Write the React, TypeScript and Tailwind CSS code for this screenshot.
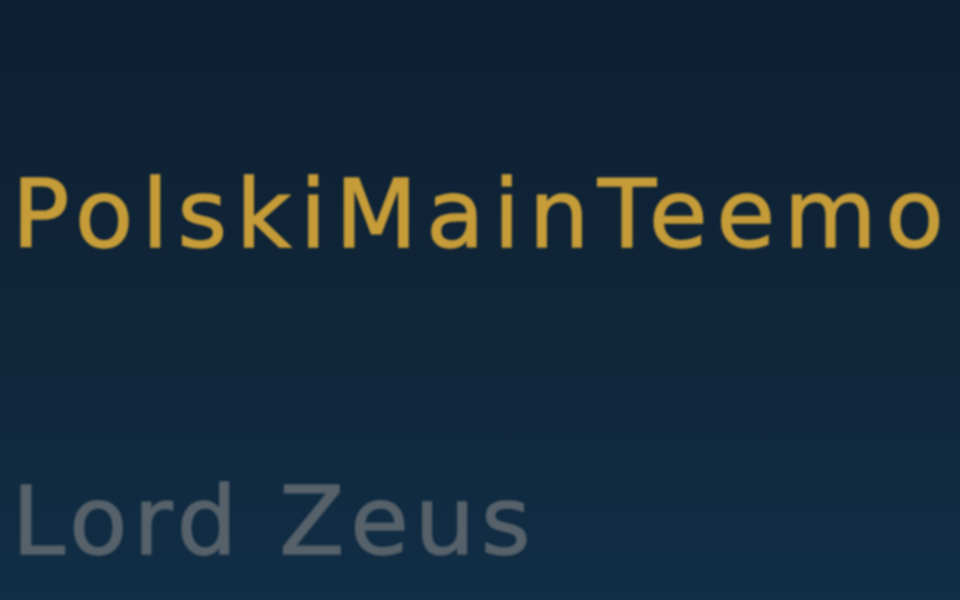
import React from 'react';

const names = [
  { name: 'PolskiMainTeemo', color: 'text-[#c69c38]', tracking: 'tracking-[9px]' },
  { name: 'Lord Zeus', color: 'text-[#56616a]', tracking: 'tracking-[6px]' },
];

const App: React.FC = () => {
  return (
    <div className="h-[600px] w-[960px] overflow-hidden bg-gradient-to-b from-[#0e2033] via-[#0f2538] to-[#112e46]">
      <div
        className="flex flex-col gap-[212px] pl-[12px] pt-[167px] blur-[1px]"
        style={{ fontFamily: '"DejaVu Sans", Verdana, sans-serif' }}
      >
        {names.map((n) => (
          <div
            key={n.name}
            className={`text-[95px] leading-none font-normal [-webkit-text-stroke:1.5px_currentColor] ${n.color} ${n.tracking}`}
          >
            {n.name}
          </div>
        ))}
      </div>
    </div>
  );
};

export default App;
